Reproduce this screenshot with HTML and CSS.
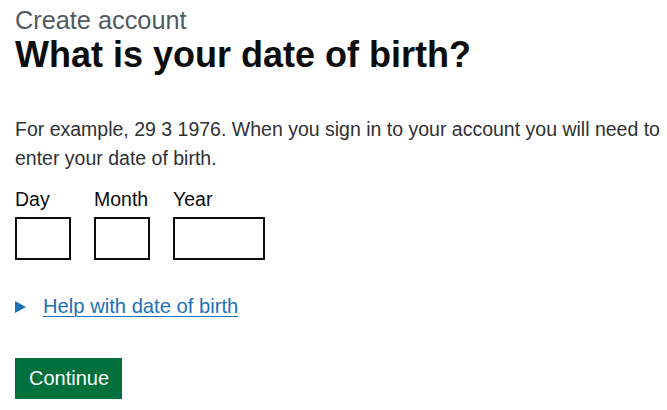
FILE: index.html
```html
<!DOCTYPE html>
<html lang="en">
<head>
<meta charset="utf-8">
<title>What is your date of birth?</title>
<link rel="stylesheet" href="styles.css">
</head>
<body>
<main class="page">
  <span class="caption">Create account</span>
  <h1 class="heading">What is your date of birth?</h1>
  <p class="hint">For example, 29 3 1976. When you sign in to your account you will need to enter your date of birth.</p>
  <div class="date-input">
    <div class="date-item">
      <label class="date-label" for="dob-day">Day</label>
      <input class="date-field w-day" id="dob-day" type="text">
    </div>
    <div class="date-item">
      <label class="date-label" for="dob-month">Month</label>
      <input class="date-field w-month" id="dob-month" type="text">
    </div>
    <div class="date-item">
      <label class="date-label" for="dob-year">Year</label>
      <input class="date-field w-year" id="dob-year" type="text">
    </div>
  </div>
  <details class="details">
    <summary class="summary"><span class="summary-text">Help with date of birth</span></summary>
  </details>
  <button class="button" type="submit">Continue</button>
</main>
</body>
</html>
```

FILE: styles.css
```css
html, body {
  margin: 0;
  padding: 0;
  background: #ffffff;
}

.page {
  padding: 6px 0 0 15px;
  font-family: "Liberation Sans", Arial, sans-serif;
  color: #0b0c0c;
}

.caption {
  display: block;
  font-size: 25.3px;
  line-height: 28px;
  color: #505a5f;
}

.heading {
  margin: 4.5px 0 0 0;
  font-size: 36px;
  line-height: 32px;
  font-weight: 700;
  color: #0b0c0c;
}

.hint {
  margin: 44.5px 0 0 0;
  font-size: 19.5px;
  line-height: 29px;
  color: #2e3133;
}

.date-input {
  display: flex;
  margin-top: 14px;
}

.date-item {
  display: flex;
  flex-direction: column;
  margin-right: 23px;
}

.date-label {
  font-size: 19.5px;
  line-height: 25px;
  margin-bottom: 5px;
  color: #0b0c0c;
}

.date-field {
  box-sizing: border-box;
  height: 43px;
  margin: 0;
  padding: 5px;
  border: 2px solid #0b0c0c;
  border-radius: 0;
  background: #ffffff;
  font: inherit;
}

.w-day { width: 56px; }
.w-month { width: 56px; }
.w-year { width: 92px; }

.details {
  margin-top: 34px;
}

.summary {
  display: flex;
  align-items: center;
  list-style: none;
  font-size: 20.2px;
  line-height: 25px;
  color: #1d70b8;
  cursor: pointer;
}

.summary::-webkit-details-marker {
  display: none;
}

.summary::before {
  content: "";
  width: 0;
  height: 0;
  border-style: solid;
  border-width: 6px 0 6px 11px;
  border-color: transparent transparent transparent #1d70b8;
  margin-right: 17px;
}

.summary-text {
  text-decoration: underline;
  text-decoration-thickness: 1px;
  text-underline-offset: 3px;
}

.button {
  display: block;
  margin: 39px 0 0 0;
  padding: 8px 13px 8px 14px;
  border: 0;
  border-radius: 0;
  background: #00703c;
  box-shadow: 0 2px 0 #002d18;
  color: #ffffff;
  font-family: "Liberation Sans", Arial, sans-serif;
  font-size: 20px;
  line-height: 25px;
  cursor: pointer;
}
```
